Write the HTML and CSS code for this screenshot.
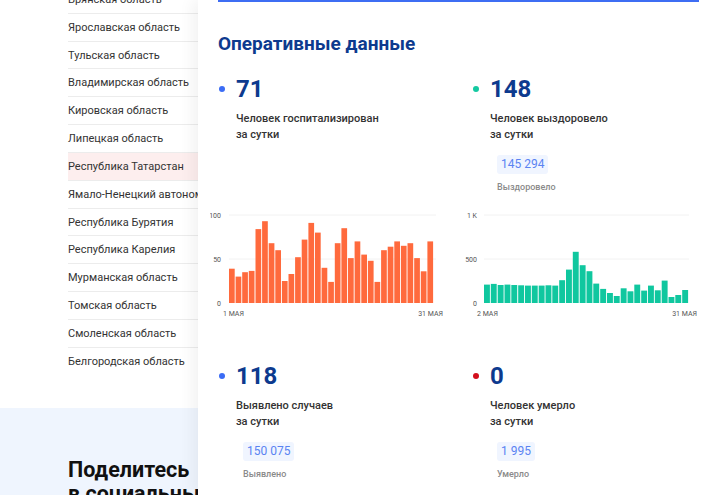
FILE: index.html
```html
<!DOCTYPE html>
<html lang="ru">
<head>
<meta charset="utf-8">
<title>Оперативные данные</title>
<link rel="stylesheet" href="styles.css">
</head>
<body>
<div class="page">
  <ul class="regions">
    <li>Брянская область</li>
    <li>Ярославская область</li>
    <li>Тульская область</li>
    <li>Владимирская область</li>
    <li>Кировская область</li>
    <li>Липецкая область</li>
    <li class="active">Республика Татарстан</li>
    <li>Ямало-Ненецкий автономный округ</li>
    <li>Республика Бурятия</li>
    <li>Республика Карелия</li>
    <li>Мурманская область</li>
    <li>Томская область</li>
    <li>Смоленская область</li>
    <li>Белгородская область</li>
  </ul>
  <section class="share">
    <h2>Поделитесь<br>в социальных сетях</h2>
  </section>
</div>

<aside class="panel">
  <div class="tabline"></div>
  <h1 class="title">Оперативные данные</h1>
  <div class="stats">
    <div class="stat">
      <div class="stat-head"><span class="dot dot-blue"></span><span class="num">71</span></div>
      <div class="label">Человек госпитализирован<br>за сутки</div>
    </div>
    <div class="stat">
      <div class="stat-head"><span class="dot dot-green"></span><span class="num">148</span></div>
      <div class="label">Человек выздоровело<br>за сутки</div>
      <div class="pill">145 294</div>
      <div class="sub">Выздоровело</div>
    </div>

    <svg class="chart" width="250" height="120" viewBox="0 0 250 120">
      <g class="grid">
        <line x1="19" y1="10" x2="226" y2="10"/>
        <line x1="19" y1="54" x2="226" y2="54"/>
      </g>
      <g class="axis" text-anchor="end">
        <text x="11" y="12.5">100</text>
        <text x="11" y="56.5">50</text>
        <text x="11" y="100.5">0</text>
      </g>
      <g class="bars-orange">
        <rect x="19.0" y="63.7" width="5.7" height="34.3"/>
        <rect x="25.6" y="71.6" width="5.7" height="26.4"/>
        <rect x="32.2" y="67.2" width="5.7" height="30.8"/>
        <rect x="38.8" y="65.9" width="5.7" height="32.1"/>
        <rect x="45.5" y="24.1" width="5.7" height="73.9"/>
        <rect x="52.1" y="16.2" width="5.7" height="81.8"/>
        <rect x="58.7" y="38.2" width="5.7" height="59.8"/>
        <rect x="65.3" y="45.2" width="5.7" height="52.8"/>
        <rect x="71.9" y="76.0" width="5.7" height="22.0"/>
        <rect x="78.5" y="69.0" width="5.7" height="29.0"/>
        <rect x="85.1" y="52.2" width="5.7" height="45.8"/>
        <rect x="91.7" y="34.6" width="5.7" height="63.4"/>
        <rect x="98.4" y="17.9" width="5.7" height="80.1"/>
        <rect x="105.0" y="27.6" width="5.7" height="70.4"/>
        <rect x="111.6" y="62.8" width="5.7" height="35.2"/>
        <rect x="118.2" y="76.9" width="5.7" height="21.1"/>
        <rect x="124.8" y="38.2" width="5.7" height="59.8"/>
        <rect x="131.4" y="23.2" width="5.7" height="74.8"/>
        <rect x="138.0" y="53.1" width="5.7" height="44.9"/>
        <rect x="144.6" y="36.4" width="5.7" height="61.6"/>
        <rect x="151.3" y="49.6" width="5.7" height="48.4"/>
        <rect x="157.9" y="55.8" width="5.7" height="42.2"/>
        <rect x="164.5" y="76.9" width="5.7" height="21.1"/>
        <rect x="171.1" y="45.2" width="5.7" height="52.8"/>
        <rect x="177.7" y="41.7" width="5.7" height="56.3"/>
        <rect x="184.3" y="36.4" width="5.7" height="61.6"/>
        <rect x="190.9" y="40.8" width="5.7" height="57.2"/>
        <rect x="197.5" y="38.2" width="5.7" height="59.8"/>
        <rect x="204.2" y="53.1" width="5.7" height="44.9"/>
        <rect x="210.8" y="66.3" width="5.7" height="31.7"/>
        <rect x="217.4" y="36.4" width="5.7" height="61.6"/>
      </g>
      <g class="axis">
        <text x="13" y="110.5">1 МАЯ</text>
        <text x="233" y="110.5" text-anchor="end">31 МАЯ</text>
      </g>
    </svg>

    <svg class="chart" width="250" height="120" viewBox="0 0 250 120">
      <g class="grid">
        <line x1="20" y1="10" x2="225" y2="10"/>
        <line x1="20" y1="54" x2="225" y2="54"/>
      </g>
      <g class="axis" text-anchor="end">
        <text x="13" y="12.5">1 K</text>
        <text x="13" y="56.5">500</text>
        <text x="13" y="100.5">0</text>
      </g>
      <g class="bars-green">
        <rect x="20.0" y="79.6" width="5.9" height="18.4"/>
        <rect x="26.8" y="78.9" width="5.9" height="19.1"/>
        <rect x="33.7" y="80.0" width="5.9" height="18.0"/>
        <rect x="40.5" y="79.6" width="5.9" height="18.4"/>
        <rect x="47.3" y="80.0" width="5.9" height="18.0"/>
        <rect x="54.2" y="80.3" width="5.9" height="17.7"/>
        <rect x="61.0" y="80.6" width="5.9" height="17.4"/>
        <rect x="67.8" y="80.6" width="5.9" height="17.4"/>
        <rect x="74.7" y="80.6" width="5.9" height="17.4"/>
        <rect x="81.5" y="80.3" width="5.9" height="17.7"/>
        <rect x="88.3" y="80.6" width="5.9" height="17.4"/>
        <rect x="95.2" y="75.2" width="5.9" height="22.8"/>
        <rect x="102.0" y="64.6" width="5.9" height="33.4"/>
        <rect x="108.8" y="46.8" width="5.9" height="51.2"/>
        <rect x="115.7" y="60.2" width="5.9" height="37.8"/>
        <rect x="122.5" y="66.2" width="5.9" height="31.8"/>
        <rect x="129.3" y="78.6" width="5.9" height="19.4"/>
        <rect x="136.2" y="83.9" width="5.9" height="14.1"/>
        <rect x="143.0" y="88.0" width="5.9" height="10.0"/>
        <rect x="149.8" y="91.0" width="5.9" height="7.0"/>
        <rect x="156.7" y="83.3" width="5.9" height="14.7"/>
        <rect x="163.5" y="86.3" width="5.9" height="11.7"/>
        <rect x="170.3" y="79.6" width="5.9" height="18.4"/>
        <rect x="177.2" y="85.6" width="5.9" height="12.4"/>
        <rect x="184.0" y="80.6" width="5.9" height="17.4"/>
        <rect x="190.8" y="85.3" width="5.9" height="12.7"/>
        <rect x="197.7" y="75.6" width="5.9" height="22.4"/>
        <rect x="204.5" y="92.0" width="5.9" height="6.0"/>
        <rect x="211.3" y="90.0" width="5.9" height="8.0"/>
        <rect x="218.2" y="85.0" width="5.9" height="13.0"/>
      </g>
      <g class="axis">
        <text x="13" y="110.5">2 МАЯ</text>
        <text x="233" y="110.5" text-anchor="end">31 МАЯ</text>
      </g>
    </svg>

    <div class="stat stat-low">
      <div class="stat-head"><span class="dot dot-blue"></span><span class="num">118</span></div>
      <div class="label">Выявлено случаев<br>за сутки</div>
      <div class="pill">150 075</div>
      <div class="sub">Выявлено</div>
    </div>
    <div class="stat stat-low">
      <div class="stat-head"><span class="dot dot-red"></span><span class="num">0</span></div>
      <div class="label">Человек умерло<br>за сутки</div>
      <div class="pill">1 995</div>
      <div class="sub">Умерло</div>
    </div>
  </div>
</aside>
</body>
</html>
```

FILE: styles.css
```css
html, body {
  margin: 0;
  padding: 0;
}

body {
  width: 720px;
  height: 495px;
  overflow: hidden;
  position: relative;
  font-family: Roboto, "Noto Sans", "Liberation Sans", sans-serif;
  background: #fff;
  color: #333;
}

.page {
  width: 720px;
}

.regions {
  list-style: none;
  margin: -14px 0 0;
  padding: 0 0 0 68px;
}

.regions li {
  box-sizing: border-box;
  height: 27.83px;
  line-height: 27px;
  border-bottom: 1px solid #ececec;
  font-size: 11px;
  color: #333;
  white-space: nowrap;
}

.regions li:last-child {
  border-bottom: none;
}

.regions li.active {
  background: #fdeeee;
}

.share {
  margin-top: 32px;
  height: 200px;
  background: #eff5fe;
  padding: 50px 0 0 68px;
  box-sizing: border-box;
}

.share h2 {
  margin: 0;
  font-size: 21.5px;
  line-height: 24px;
  font-weight: 700;
  color: #111;
}

.panel {
  position: absolute;
  top: 0;
  left: 198px;
  right: 0;
  bottom: 0;
  background: #fff;
  box-shadow: -6px 0 14px rgba(0, 0, 0, 0.05);
  padding: 0 21px 0 20px;
}

.tabline {
  height: 2px;
  background: #3e6df3;
}

.title {
  margin: 0;
  padding-top: 30px;
  font-size: 19px;
  line-height: 24px;
  font-weight: 700;
  color: #0d3a8e;
}

.stats {
  display: grid;
  grid-template-columns: 254px 1fr;
  align-items: start;
  margin-top: 19px;
}

.stat {
  padding-left: 18px;
}

.stat-low {
  margin-top: 37px;
}

.stat-head {
  display: flex;
  align-items: center;
  height: 28px;
  margin-left: -17px;
}

.dot {
  width: 6px;
  height: 6px;
  border-radius: 50%;
  margin-right: 11px;
  flex: none;
}

.dot-blue { background: #3b6cf5; }
.dot-green { background: #14c9a1; }
.dot-red { background: #d30f1c; }

.num {
  font-size: 24px;
  line-height: 28px;
  font-weight: 700;
  color: #0d3a8e;
}

.label {
  margin-top: 8px;
  font-size: 11px;
  line-height: 16px;
  font-weight: 500;
  color: #333;
}

.pill {
  display: inline-block;
  margin: 12px 0 0 7px;
  padding: 0 4px;
  height: 19px;
  line-height: 19px;
  background: #f0f5ff;
  color: #5a83f2;
  font-size: 12px;
  border-radius: 3px;
}

.sub {
  margin: 7px 0 0 7px;
  font-size: 9px;
  line-height: 12px;
  font-weight: 500;
  color: #8a8a8a;
}

.chart {
  display: block;
  margin: 12px 0 0 -8px;
}

.chart .grid line {
  stroke: #f2f2f2;
  stroke-width: 1;
}

.chart .axis text {
  font-family: Roboto, "Liberation Sans", sans-serif;
  font-size: 7px;
  fill: #555;
}

.bars-orange rect { fill: #ff6a3d; }
.bars-green rect { fill: #10c79f; }
```
